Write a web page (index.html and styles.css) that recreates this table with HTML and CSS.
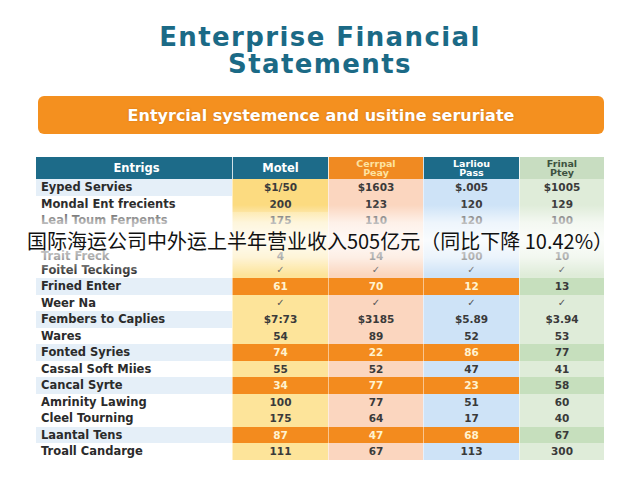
FILE: index.html
```html
<!DOCTYPE html>
<html>
<head>
<meta charset="utf-8">
<link rel="stylesheet" href="styles.css">
</head>
<body>
<div class="page">
  <h1 class="title">Enterprise Financial<br>Statements</h1>
  <div class="banner">Entyrcial systemence and usitine seruriate</div>
  <div class="table">
    <div class="row head">
      <div class="c c1 h-teal">Entrigs</div>
      <div class="c h-teal">Motel</div>
      <div class="c h-orange two">Cerrpal<br>Peay</div>
      <div class="c h-teal two">Larliou<br>Pass</div>
      <div class="c h-green two">Frinal<br>Ptey</div>
    </div>
    <div class="row stripe strong"><div class="c c1">Eyped Servies</div><div class="c y deep">$1/50</div><div class="c p">$1603</div><div class="c b">$.005</div><div class="c g">$1005</div></div>
    <div class="row strong"><div class="c c1">Mondal Ent frecients</div><div class="c y deep">200</div><div class="c p">123</div><div class="c b">120</div><div class="c g">129</div></div>
    <div class="row"><div class="c c1">Leal Toum Ferpents</div><div class="c y">175</div><div class="c p">110</div><div class="c b">120</div><div class="c g">100</div></div>
    <div class="row"><div class="c c1"></div><div class="c y"></div><div class="c p"></div><div class="c b"></div><div class="c g"></div></div>
    <div class="row low"><div class="c c1">Trait Freck</div><div class="c y">4</div><div class="c p">14</div><div class="c b">100</div><div class="c g">10</div></div>
    <div class="row"><div class="c c1">Foitel Teckings</div><div class="c y ck">✓</div><div class="c p ck">✓</div><div class="c b ck">✓</div><div class="c g ck">✓</div></div>
    <div class="row stripe hi"><div class="c c1">Frined Enter</div><div class="c o">61</div><div class="c o">70</div><div class="c o">12</div><div class="c g2">13</div></div>
    <div class="row"><div class="c c1">Weer Na</div><div class="c y ck">✓</div><div class="c p ck">✓</div><div class="c b ck">✓</div><div class="c g ck">✓</div></div>
    <div class="row stripe"><div class="c c1">Fembers to Caplies</div><div class="c y">$7:73</div><div class="c p">$3185</div><div class="c b">$5.89</div><div class="c g">$3.94</div></div>
    <div class="row"><div class="c c1">Wares</div><div class="c y">54</div><div class="c p">89</div><div class="c b">52</div><div class="c g">53</div></div>
    <div class="row stripe hi"><div class="c c1">Fonted Syries</div><div class="c o">74</div><div class="c o">22</div><div class="c o">86</div><div class="c g2">77</div></div>
    <div class="row"><div class="c c1">Cassal Soft Miies</div><div class="c y">55</div><div class="c p">52</div><div class="c b">47</div><div class="c g">41</div></div>
    <div class="row stripe hi"><div class="c c1">Cancal Syrte</div><div class="c o">34</div><div class="c o">77</div><div class="c o">23</div><div class="c g2">58</div></div>
    <div class="row"><div class="c c1">Amrinity Lawing</div><div class="c y">100</div><div class="c p">77</div><div class="c b">51</div><div class="c g">60</div></div>
    <div class="row"><div class="c c1">Cleel Tourning</div><div class="c y">175</div><div class="c p">64</div><div class="c b">17</div><div class="c g">40</div></div>
    <div class="row stripe hi"><div class="c c1">Laantal Tens</div><div class="c o">87</div><div class="c o">47</div><div class="c o">68</div><div class="c g2">67</div></div>
    <div class="row"><div class="c c1">Troall Candarge</div><div class="c y">111</div><div class="c p">67</div><div class="c b">113</div><div class="c g">300</div></div>
  </div>
  <div class="caption-band"></div>
  <div class="caption">国际海运公司中外运上半年营业收入505亿元（同比下降 10.42%）</div>
</div>
</body>
</html>
```

FILE: styles.css
```css
html, body {
  margin: 0;
  padding: 0;
  background: #ffffff;
}
.page {
  position: relative;
  width: 640px;
  height: 480px;
  overflow: hidden;
  font-family: "DejaVu Sans", sans-serif;
}
.title {
  margin: 0;
  padding-top: 24px;
  text-align: center;
  font-family: "DejaVu Sans", sans-serif;
  font-weight: bold;
  font-size: 26px;
  line-height: 27px;
  letter-spacing: 1.4px;
  color: #1b6a86;
}
.banner {
  margin: 18px 36px 0 38px;
  height: 38px;
  border-radius: 6px;
  background: #f4901f;
  color: #ffffff;
  font-weight: bold;
  font-size: 16px;
  text-shadow: 0 0 2px rgba(120, 60, 0, 0.35);
  display: flex;
  align-items: center;
  justify-content: center;
}
.table {
  margin: 23px 0 0 36px;
  width: 568px;
}
.row {
  display: grid;
  grid-template-columns: 196px 96px 95px 96px 85px;
  height: 16.5px;
}
.row.head {
  height: 22px;
}
.c {
  display: flex;
  align-items: center;
  justify-content: center;
  font-size: 10.5px;
  font-weight: bold;
  color: #3a3a3a;
  border-left: 1px solid rgba(255,255,255,0.5);
}
.low .c {
  align-items: flex-end;
  line-height: 11px;
}
.c1 {
  justify-content: flex-start;
  padding-left: 5px;
  font-size: 11.5px;
  color: #2b2b2b;
  border-left: none;
}
.stripe .c1 { background: #e5eff8; }
.head .c { font-size: 11.5px; color: #ffffff; border-left: 1px solid rgba(255,255,255,0.8); }
.head .c1 { justify-content: center; border-left: none; }
.head .two { font-size: 9.5px; line-height: 9px; text-align: center; }
.h-teal { background: #1d6b89; }
.h-orange { background: #f08a22; }
.head .h-orange { color: #fde3a2; }
.h-green { background: #c8ddc1; }
.head .h-green { color: #3e5240; }
.y { background: #fde49a; }
.y.deep { background: #fcdb80; }
.p { background: #fbd6bf; }
.b { background: #cee3f7; }
.g { background: #dfecd9; }
.g2 { background: #c6dfbd; }
.o { background: #f38b1e; color: #fff3d0; }
.ck { font-weight: normal; font-size: 10px; color: #555; }
.caption-band {
  position: absolute;
  left: 0;
  top: 205px;
  width: 640px;
  height: 70px;
  background: linear-gradient(to bottom, rgba(255,255,255,0) 0%, rgba(255,255,255,0.65) 25%, rgba(255,255,255,0.88) 50%, rgba(255,255,255,0.6) 75%, rgba(255,255,255,0) 100%);
}
.caption {
  position: absolute;
  left: 0;
  top: 232px;
  width: 640px;
  text-align: center;
  font-family: "Noto Sans CJK SC", sans-serif;
  font-size: 20px;
  line-height: 18px;
  color: #111111;
}
```
